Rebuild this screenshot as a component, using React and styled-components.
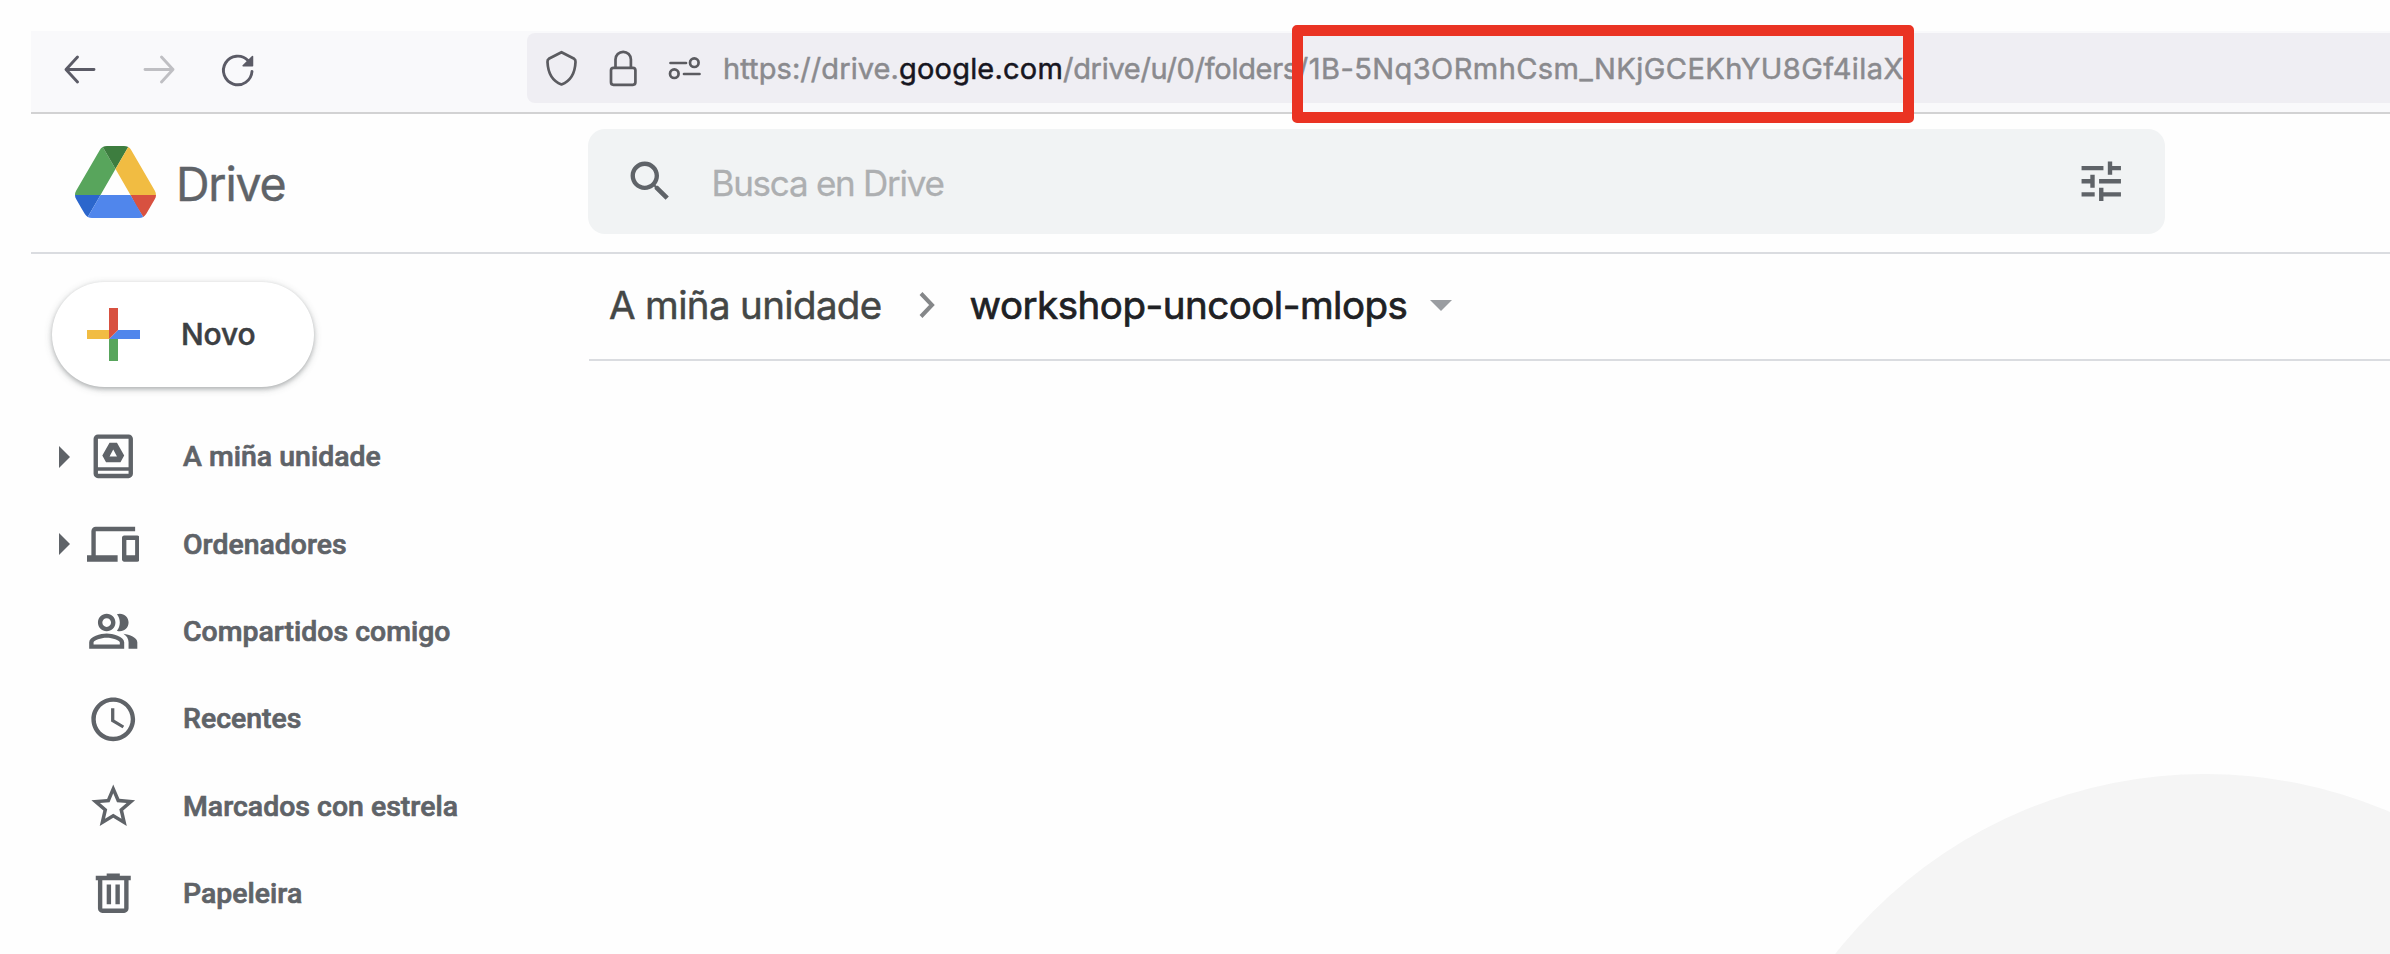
import React from "react";
import styled, { createGlobalStyle } from "styled-components";

const GlobalStyle = createGlobalStyle`
  *, *::before, *::after { box-sizing: border-box; }
  html, body { margin: 0; padding: 0; background: #fefefe; }
  body { overflow: hidden; }
`;

const Window = styled.div`
  position: relative;
  width: 2390px;
  height: 954px;
  padding: 31px 0 0 31px;
  overflow: hidden;
  background: #fefefe;
  display: flex;
  flex-direction: column;
  font-family: Inter, "Liberation Sans", sans-serif;
`;

const BrowserBar = styled.div`
  display: flex;
  height: 83px;
  flex: none;
  padding-top: 2px;
  background: #f9f9fb;
  border-bottom: 2px solid #d2d2d3;
`;

const NavButtons = styled.div`
  display: flex;
  width: 496px;
  height: 70px;
  padding-left: 26px;
  gap: 32.5px;
  align-items: center;
`;

const NavIcon = styled.svg`
  width: 46px;
  height: 46px;
  flex: none;
  fill: none;
  stroke: ${(p) => (p.$faded ? "#bfbfc3" : "#5b5b66")};
  stroke-width: 2.9;
  stroke-linecap: round;
  stroke-linejoin: round;
`;

const AddressBar = styled.div`
  flex: 1;
  height: 70px;
  display: flex;
  align-items: center;
  padding-left: 11px;
  border-radius: 8px 0 0 8px;
  background: #efeef3;
`;

const AddressIcon = styled.svg`
  width: 46px;
  height: 46px;
  flex: none;
  margin-right: ${(p) => p.$gap}px;
  fill: none;
  stroke: #5b5b60;
  stroke-width: 2.7;
  stroke-linejoin: round;
  stroke-linecap: round;
`;

const Url = styled.div`
  display: flex;
  height: 70px;
  line-height: 72px;
  font-size: 29px;
  color: #8a8a8e;
  -webkit-text-stroke: 0.5px currentColor;
  white-space: pre;
`;

const UrlPart = styled.span`
  color: ${(p) => (p.$strong ? "#17161f" : "inherit")};
  letter-spacing: ${(p) => p.$track || 0}px;
`;

const Highlight = styled.div`
  position: absolute;
  left: 1292px;
  top: 25px;
  width: 622px;
  height: 98px;
  border: 11px solid #ea3323;
  border-radius: 5px;
`;

const Header = styled.header`
  display: flex;
  flex: none;
  height: 140px;
  padding-top: 15px;
  border-bottom: 2px solid #dadce0;
`;

const Brand = styled.div`
  display: flex;
  width: 557px;
  height: 105px;
  padding-left: 44px;
  align-items: center;
  gap: 20px;
`;

const Logo = styled.svg`
  width: 81px;
  height: 72px;
  flex: none;
`;

const BrandName = styled.span`
  padding-top: 4px;
  font-size: 46.5px;
  line-height: 60px;
  letter-spacing: -1.2px;
  color: #5f6368;
  -webkit-text-stroke: 0.4px currentColor;
`;

const Search = styled.div`
  display: flex;
  width: 1577px;
  height: 105px;
  padding: 0 38px 0 36px;
  align-items: center;
  border-radius: 17px;
  background: #f1f3f4;
`;

const Placeholder = styled.span`
  flex: 1;
  padding: 3px 0 0 35px;
  font-size: 35px;
  line-height: 48px;
  letter-spacing: -1.25px;
  color: #adafb1;
  -webkit-text-stroke: 0.3px currentColor;
`;

const Glyph = styled.svg`
  width: 52.5px;
  height: 52.5px;
  flex: none;
  fill: #5f6368;
`;

const Body = styled.div`
  display: flex;
  flex: 1;
  min-height: 0;
`;

const Sidebar = styled.nav`
  width: 558px;
  flex: none;
  padding: 28px 0 0 21px;
`;

const NewButton = styled.button`
  display: flex;
  align-items: center;
  width: 262px;
  height: 105px;
  padding: 0 0 0 34.5px;
  gap: 41.5px;
  border: 0;
  border-radius: 53px;
  background: #fff;
  box-shadow: 0 2px 4px rgba(60, 64, 67, 0.32), 0 2px 7px 2px rgba(60, 64, 67, 0.12);
  font: 500 30px Inter, sans-serif;
  letter-spacing: -0.1px;
  color: #3c4043;
  -webkit-text-stroke: 0.5px currentColor;
`;

const NewLabel = styled.span`
  padding-bottom: 2px;
`;

const Plus = styled.svg`
  width: 53px;
  height: 53px;
`;

const NavList = styled.ul`
  margin: 26px 0 0;
  padding: 0;
  list-style: none;
`;

const NavRow = styled.li`
  display: flex;
  align-items: center;
  height: 87.4px;
`;

const Expander = styled.span`
  width: 34.5px;
  height: 22px;
  padding-left: 6.5px;
  flex: none;
  &::before {
    content: "";
    display: ${(p) => (p.$shown ? "block" : "none")};
    width: 0;
    height: 0;
    border-left: 11px solid #5f6368;
    border-top: 11px solid transparent;
    border-bottom: 11px solid transparent;
  }
`;

const NavLabel = styled.span`
  padding: 1px 0 0 44px;
  font: 500 28.4px/40px Roboto, sans-serif;
  letter-spacing: 0.03px;
  color: #5f6368;
  -webkit-text-stroke: 0.7px currentColor;
  white-space: nowrap;
`;

const Main = styled.main`
  position: relative;
  flex: 1;
  overflow: hidden;
`;

const Breadcrumbs = styled.div`
  display: flex;
  align-items: center;
  height: 107px;
  padding: 0 0 3px 20px;
  border-bottom: 2px solid #dadce0;
`;

const Crumb = styled.span`
  font-size: 38.5px;
  line-height: 50px;
  letter-spacing: ${(p) => p.$track}px;
  color: ${(p) => (p.$current ? "#202124" : "#444746")};
  -webkit-text-stroke: ${(p) => (p.$current ? 0.7 : 0.5)}px currentColor;
  white-space: nowrap;
`;

const Chevron = styled.svg`
  width: 20px;
  height: 30px;
  margin: 0 33px 0 35px;
  fill: none;
  stroke: #858789;
  stroke-width: 4;
`;

const Caret = styled.span`
  margin-left: 23px;
  border-top: 11px solid #9a9da1;
  border-left: 11px solid transparent;
  border-right: 11px solid transparent;
`;

const EmptyArt = styled.div`
  position: absolute;
  left: 1146px;
  top: 520px;
  width: 940px;
  height: 940px;
  border-radius: 50%;
  background: #f5f5f5;
`;

const icons = {
  drive: (
    <path
      fillRule="evenodd"
      d="M5 2h14c1.1 0 2 .9 2 2v16c0 1.1-.9 2-2 2H5c-1.1 0-2-.9-2-2V4c0-1.1.9-2 2-2zm0 2v13h14V4H5zm0 14.6V20h14v-1.400H5zM10.300 5.800h3.400l3.300 5.900-1.700 3H8.700L7 11.700zM12 8.900l-1.700 3.200h3.400z"
    />
  ),
  devices: (
    <path d="M4 6h18V4H4c-1.100 0-2 .9-2 2v11H0v3h14v-3H4V6zm19 2h-6c-.55 0-1 .45-1 1v10c0 .55.45 1 1 1h6c.55 0 1-.45 1-1V9c0-.55-.45-1-1-1zm-1 9h-4v-7h4v7z" />
  ),
  people: (
    <>
      <path d="M9 12c2.210 0 4-1.790 4-4s-1.790-4-4-4-4 1.790-4 4 1.790 4 4 4zm0-6c1.100 0 2 .9 2 2s-.9 2-2 2-2-.9-2-2 .9-2 2-2zm0 7c-2.670 0-8 1.340-8 4v3h16v-3c0-2.660-5.330-4-8-4zm6 5H3v-.99C3.200 16.290 6.300 15 9 15s5.800 1.290 6 2v1z" />
      <path d="M16.670 13.130C18.040 14.060 19 15.320 19 17v3h4v-3c0-2.180-3.570-3.470-6.330-3.870zM15 12c2.210 0 4-1.790 4-4s-1.790-4-4-4c-.47 0-.91.1-1.330.24C14.500 5.270 15 6.580 15 8s-.5 2.730-1.330 3.760c.42.14.86.24 1.330.24z" />
    </>
  ),
  clock: (
    <path d="M11.990 2C6.470 2 2 6.480 2 12s4.470 10 9.990 10C17.520 22 22 17.520 22 12S17.520 2 11.990 2zM12 20c-4.420 0-8-3.580-8-8s3.580-8 8-8 8 3.580 8 8-3.580 8-8 8zm.5-13H11v6l5.250 3.150.75-1.230-4.500-2.670z" />
  ),
  star: (
    <path d="M22 9.240l-7.190-.62L12 2 9.190 8.630 2 9.240l5.460 4.730L5.820 21 12 17.270 18.180 21l-1.630-7.030L22 9.240zM12 15.400l-3.760 2.270 1-4.280-3.320-2.880 4.380-.38L12 6.100l1.710 4.040 4.380.38-3.320 2.880 1 4.280L12 15.400z" />
  ),
  trash: (
    <path d="M15 4V3H9v1H4v2h1v13c0 1.100.9 2 2 2h10c1.100 0 2-.9 2-2V6h1V4h-5zm2 15H7V6h10v13zM9 8h2v9H9zm4 0h2v9h-2z" />
  ),
  search: (
    <path d="M15.500 14h-.79l-.28-.27C15.410 12.590 16 11.110 16 9.500 16 5.910 13.090 3 9.500 3S3 5.910 3 9.500 5.910 16 9.500 16c1.610 0 3.090-.59 4.230-1.570l.27.28v.79l5 4.990L20.490 19l-4.990-5zm-6 0C7.010 14 5 11.990 5 9.500S7.010 5 9.500 5 14 7.010 14 9.500 11.990 14 9.500 14z" />
  ),
  tune: (
    <path d="M3 17v2h6v-2H3zM3 5v2h10V5H3zm10 16v-2h8v-2h-8v-2h-2v6h2zM7 9v2H3v2h4v2h2V9H7zm14 4v-2H11v2h10zm-6-4h2V7h4V5h-4V3h-2v6z" />
  ),
};

function Icon({ name }) {
  return <Glyph viewBox="0 0 24 24">{icons[name]}</Glyph>;
}

const places = [
  { icon: "drive", label: "A miña unidade", expandable: true },
  { icon: "devices", label: "Ordenadores", expandable: true },
  { icon: "people", label: "Compartidos comigo" },
  { icon: "clock", label: "Recentes" },
  { icon: "star", label: "Marcados con estrela" },
  { icon: "trash", label: "Papeleira" },
];

function DriveLogo() {
  return (
    <Logo viewBox="0 0 87.3 78" preserveAspectRatio="none">
      <path fill="#2b66cc" d="m6.600 66.850 3.850 6.650c.8 1.400 1.950 2.500 3.300 3.300l13.750-23.800h-27.500c0 1.550.4 3.100 1.200 4.500z" />
      <path fill="#58a55c" d="m43.650 25-13.750-23.800c-1.350.8-2.500 1.900-3.300 3.300l-25.400 44a9.060 9.060 0 0 0 -1.200 4.500h27.500z" />
      <path fill="#d85140" d="m73.550 76.800c1.350-.8 2.500-1.900 3.300-3.300l1.600-2.750 7.650-13.250c.8-1.400 1.200-2.950 1.200-4.500h-27.500l5.850 11.500z" />
      <path fill="#3d7d3f" d="m43.650 25 13.750-23.800c-1.350-.8-2.900-1.200-4.500-1.200h-18.500c-1.600 0-3.150.45-4.500 1.200z" />
      <path fill="#5086ec" d="m59.800 53h-32.300l-13.750 23.800c1.350.8 2.900 1.200 4.500 1.200h50.800c1.600 0 3.150-.45 4.500-1.200z" />
      <path fill="#f1bc42" d="m73.400 26.500-12.700-22c-.8-1.400-1.950-2.500-3.300-3.300l-13.750 23.800 16.150 28h27.450c0-1.550-.4-3.100-1.200-4.500z" />
    </Logo>
  );
}

export default function App() {
  return (
    <Window>
      <GlobalStyle />
      <BrowserBar>
        <NavButtons>
          <NavIcon viewBox="0 0 46 46">
            <path d="M37 24.500H9.500M20.500 12 9 24.500 20.500 37" />
          </NavIcon>
          <NavIcon viewBox="0 0 46 46" $faded>
            <path d="M9 24.500h28M25.500 12 37 24.500 25.500 37" />
          </NavIcon>
          <NavIcon viewBox="0 0 46 46">
            <path d="M38 26.500A14.300 14.300 0 1 1 34 15.500" />
            <path d="M38.500 11.500v9.200h-9.400z" fill="#5b5b66" strokeWidth="1.500" />
          </NavIcon>
        </NavButtons>
        <AddressBar>
          <AddressIcon viewBox="0 0 46 46" $gap={16}>
            <path d="M23.500 7.200 36.200 13.800Q37.700 14.800 37.500 17C37 29 31.500 36.500 23.500 39.500 15.500 36.500 10 29 9.500 17Q9.300 14.800 10.800 13.800z" />
          </AddressIcon>
          <AddressIcon viewBox="0 0 46 46" $gap={15}>
            <rect x="11" y="22.800" width="24.400" height="17" rx="2.500" />
            <path d="M15.500 22.500V14.500a7.700 7.700 0 0 1 15.400 0v8" />
          </AddressIcon>
          <AddressIcon viewBox="0 0 46 46" $gap={16}>
            <path d="M9.500 18H25M23 29h15.500" />
            <circle cx="33.300" cy="17.700" r="4.300" />
            <circle cx="13.300" cy="28.700" r="4.300" />
          </AddressIcon>
          <Url>
            <UrlPart $track={0.08}>https://drive.</UrlPart>
            <UrlPart $strong $track={0.2}>google.com</UrlPart>
            <UrlPart $track={-0.3}>/drive/u/0/folders</UrlPart>
            <UrlPart $track={0.44}>/1B-5Nq3ORmhCsm_NKjGCEKhYU8Gf4ilaX</UrlPart>
          </Url>
        </AddressBar>
      </BrowserBar>
      <Header>
        <Brand>
          <DriveLogo />
          <BrandName>Drive</BrandName>
        </Brand>
        <Search>
          <Icon name="search" />
          <Placeholder>Busca en Drive</Placeholder>
          <Icon name="tune" />
        </Search>
      </Header>
      <Body>
        <Sidebar>
          <NewButton>
            <Plus viewBox="0 0 53 53">
              <path fill="#f1bc42" d="M0 22h22v9H0z" />
              <path fill="#58a55c" d="M22 31h9v22h-9z" />
              <path fill="#5086ec" d="M31 22h22v9H22z" />
              <path fill="#d85140" d="M22 0h9v22l-9 9z" />
            </Plus>
            <NewLabel>Novo</NewLabel>
          </NewButton>
          <NavList>
            {places.map((p) => (
              <NavRow key={p.label}>
                <Expander $shown={p.expandable} />
                <Icon name={p.icon} />
                <NavLabel>{p.label}</NavLabel>
              </NavRow>
            ))}
          </NavList>
        </Sidebar>
        <Main>
          <Breadcrumbs>
            <Crumb $track={-0.65}>A miña unidade</Crumb>
            <Chevron viewBox="0 0 20 30">
              <path d="M4 3.500 15 15 4 26.500" />
            </Chevron>
            <Crumb $current $track={-0.5}>workshop-uncool-mlops</Crumb>
            <Caret />
          </Breadcrumbs>
          <EmptyArt />
        </Main>
      </Body>
      <Highlight />
    </Window>
  );
}
